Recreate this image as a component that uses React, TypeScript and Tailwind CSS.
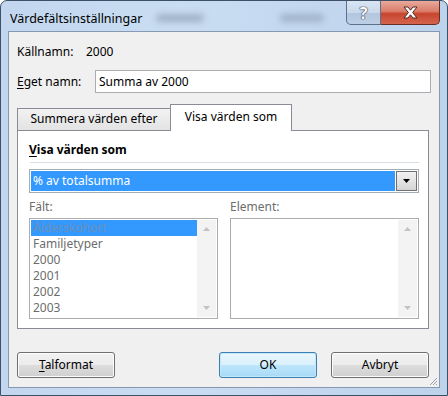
import React from "react";

const FIELDS = ["Ålderskohort", "Familjetyper", "2000", "2001", "2002", "2003"];

const Tri = ({ up, color = "#c2c2c2" }: { up?: boolean; color?: string }) => (
  <svg width="7" height="4" viewBox="0 0 7 4">
    <path d={up ? "M0 4 L3.5 0 L7 4 Z" : "M0 0 L7 0 L3.5 4 Z"} fill={color} />
  </svg>
);

const Scrollbar = () => (
  <div className="flex w-[19px] flex-col items-center justify-between bg-[#f3f3f3] py-[7px]">
    <Tri up />
    <Tri />
  </div>
);

const WinButton = ({
  children,
  primary,
  className = "",
}: {
  children: React.ReactNode;
  primary?: boolean;
  className?: string;
}) => (
  <div
    className={
      "flex h-[26px] w-[98px] items-center justify-center rounded-[3px] border text-[12px] text-black " +
      (primary
        ? "border-[#3c7fb1] bg-[linear-gradient(#eaf6fd_0%,#d9f0fc_50%,#bee6fd_51%,#a7d9f5_100%)] shadow-[inset_0_0_0_1px_#c3e8fb] "
        : "border-[#707070] bg-[linear-gradient(#f2f2f2_0%,#ebebeb_50%,#dddddd_51%,#cfcfcf_100%)] shadow-[inset_0_0_0_1px_#fcfcfc] ") +
      className
    }
  >
    {children}
  </div>
);

export default function App() {
  return (
    <div className="h-[396px] w-[448px] overflow-hidden bg-white font-['Noto_Sans',sans-serif] text-[12px] leading-[16px]">
      <div className="flex h-[396px] w-[448px] flex-col rounded-t-[7px] border border-[#3e5068] bg-[linear-gradient(90deg,#c2d7ef_0%,#c9ddf2_40%,#bdd3ec_100%)]">
        {/* title bar */}
        <div className="flex h-[30px] shrink-0 items-start">
          <div className="mt-[10px] ml-[9px] text-[12.5px] text-black">Värdefältsinställningar</div>
          <div className="mt-[13px] ml-[14px] h-[8px] w-[48px] rounded-full bg-[#9fb2c8] blur-[3px]" />
          <div className="mt-[13px] ml-[76px] h-[8px] w-[44px] rounded-full bg-[#9fb2c8] blur-[3px]" />
          <div className="ml-auto mr-[7px] flex">
            <div className="flex h-[24px] w-[35px] items-center justify-center rounded-bl-[5px] border border-t-0 border-[#5d7089] bg-[linear-gradient(#d9e5f3_0%,#c9d8ea_50%,#b2c6de_51%,#bccfe5_100%)]">
              <span className="text-[16px] font-bold text-white [text-shadow:0_0_1px_#334,0_0_1px_#334,0_0_1px_#334]">?</span>
            </div>
            <div className="flex h-[24px] w-[59px] items-center justify-center rounded-br-[5px] border border-t-0 border-l-0 border-[#6a2d22] bg-[linear-gradient(#e9a99b_0%,#d97d6a_45%,#c8452f_55%,#d4644c_100%)]">
              <svg width="15" height="13" viewBox="0 0 15 13">
                <path
                  d="M1 1 H5 L7.5 4.2 L10 1 H14 L9.6 6.5 L14 12 H10 L7.5 8.8 L5 12 H1 L5.4 6.5 Z"
                  fill="#fff"
                  stroke="#4a2a25"
                  strokeWidth="1"
                />
              </svg>
            </div>
          </div>
        </div>

        {/* client area */}
        <div className="relative mx-[7px] mb-[7px] flex flex-1 flex-col border border-[#8699b0] bg-[#f0f0f0] pt-[12px] pr-[8px] pl-[8px]">
          <div className="flex h-[16px] items-center">
            <span className="w-[69px]">Källnamn:</span>
            <span>2000</span>
          </div>
          <div className="mt-[10px] flex h-[23px] items-center">
            <span className="w-[78px]">
              <span className="underline underline-offset-2">E</span>get namn:
            </span>
            <div className="flex h-[23px] w-[336px] items-center border border-[#abadb3] bg-white pl-[3px]">
              Summa av 2000
            </div>
          </div>

          {/* tabs */}
          <div className="mt-[11px] flex h-[26px] items-end">
            <div className="flex h-[22px] w-[153px] items-center justify-center border border-r-0 border-b-0 border-[#898c95] bg-[linear-gradient(#f2f2f2,#e3e3e3)] pb-[1px]">
              Summera värden efter
            </div>
            <div className="relative z-10 -mb-px flex h-[27px] w-[122px] items-center justify-center border border-b-0 border-[#898c95] bg-white pb-[2px]">
              Visa värden som
            </div>
          </div>
          <div className="flex h-[199px] w-[412px] flex-col border border-[#898c95] bg-white pr-[9px] pl-[11px]">
            <div className="mt-[11px] h-[16px] font-bold">
              <span className="underline underline-offset-2">V</span>isa värden som
            </div>
            <div className="mt-[4px] ml-[1px] h-px bg-[#d5dfe5]" />
            <div className="mt-[6px] flex h-[24px] border border-[#a5acb5] bg-white p-px">
              <div className="flex flex-1 items-center bg-[#3399ff] pl-[2px] text-white">% av totalsumma</div>
              <div className="ml-px flex w-[21px] items-center justify-center border border-[#707070] bg-[linear-gradient(#f2f2f2,#d5d5d5)]">
                <Tri color="#000" />
              </div>
            </div>
            <div className="mt-[6px] flex h-[16px] text-[#6d6d6d]">
              <span className="w-[201px]">Fält:</span>
              <span>Element:</span>
            </div>
            <div className="mt-[3px] flex h-[101px] gap-[12px]">
              <div className="flex w-[189px] border border-[#acacac] bg-white p-px">
                <div className="flex flex-1 flex-col overflow-hidden text-[#6d6d6d]">
                  {FIELDS.map((f, i) => (
                    <div
                      key={f}
                      className={
                        "h-[16px] shrink-0 pl-[2px] " + (i === 0 ? "bg-[#3399ff] text-[#6c8fb8]" : "")
                      }
                    >
                      {f}
                    </div>
                  ))}
                </div>
                <Scrollbar />
              </div>
              <div className="flex w-[189px] border border-[#acacac] bg-white p-px">
                <div className="flex-1" />
                <Scrollbar />
              </div>
            </div>
          </div>

          {/* buttons */}
          <div className="mt-[23px] flex">
            <WinButton>
              <span>
                <span className="underline underline-offset-2">T</span>alformat
              </span>
            </WinButton>
            <WinButton primary className="ml-[104px]">
              OK
            </WinButton>
            <WinButton className="ml-[14px]">Avbryt</WinButton>
          </div>

          {/* resize grip */}
          <svg className="absolute right-px bottom-px" width="10" height="10" viewBox="0 0 10 10">
            <path d="M9 2 L2 9 M9 5 L5 9 M9 8 L8 9" stroke="#9aa3ad" strokeWidth="1" />
          </svg>
        </div>
      </div>
    </div>
  );
}
